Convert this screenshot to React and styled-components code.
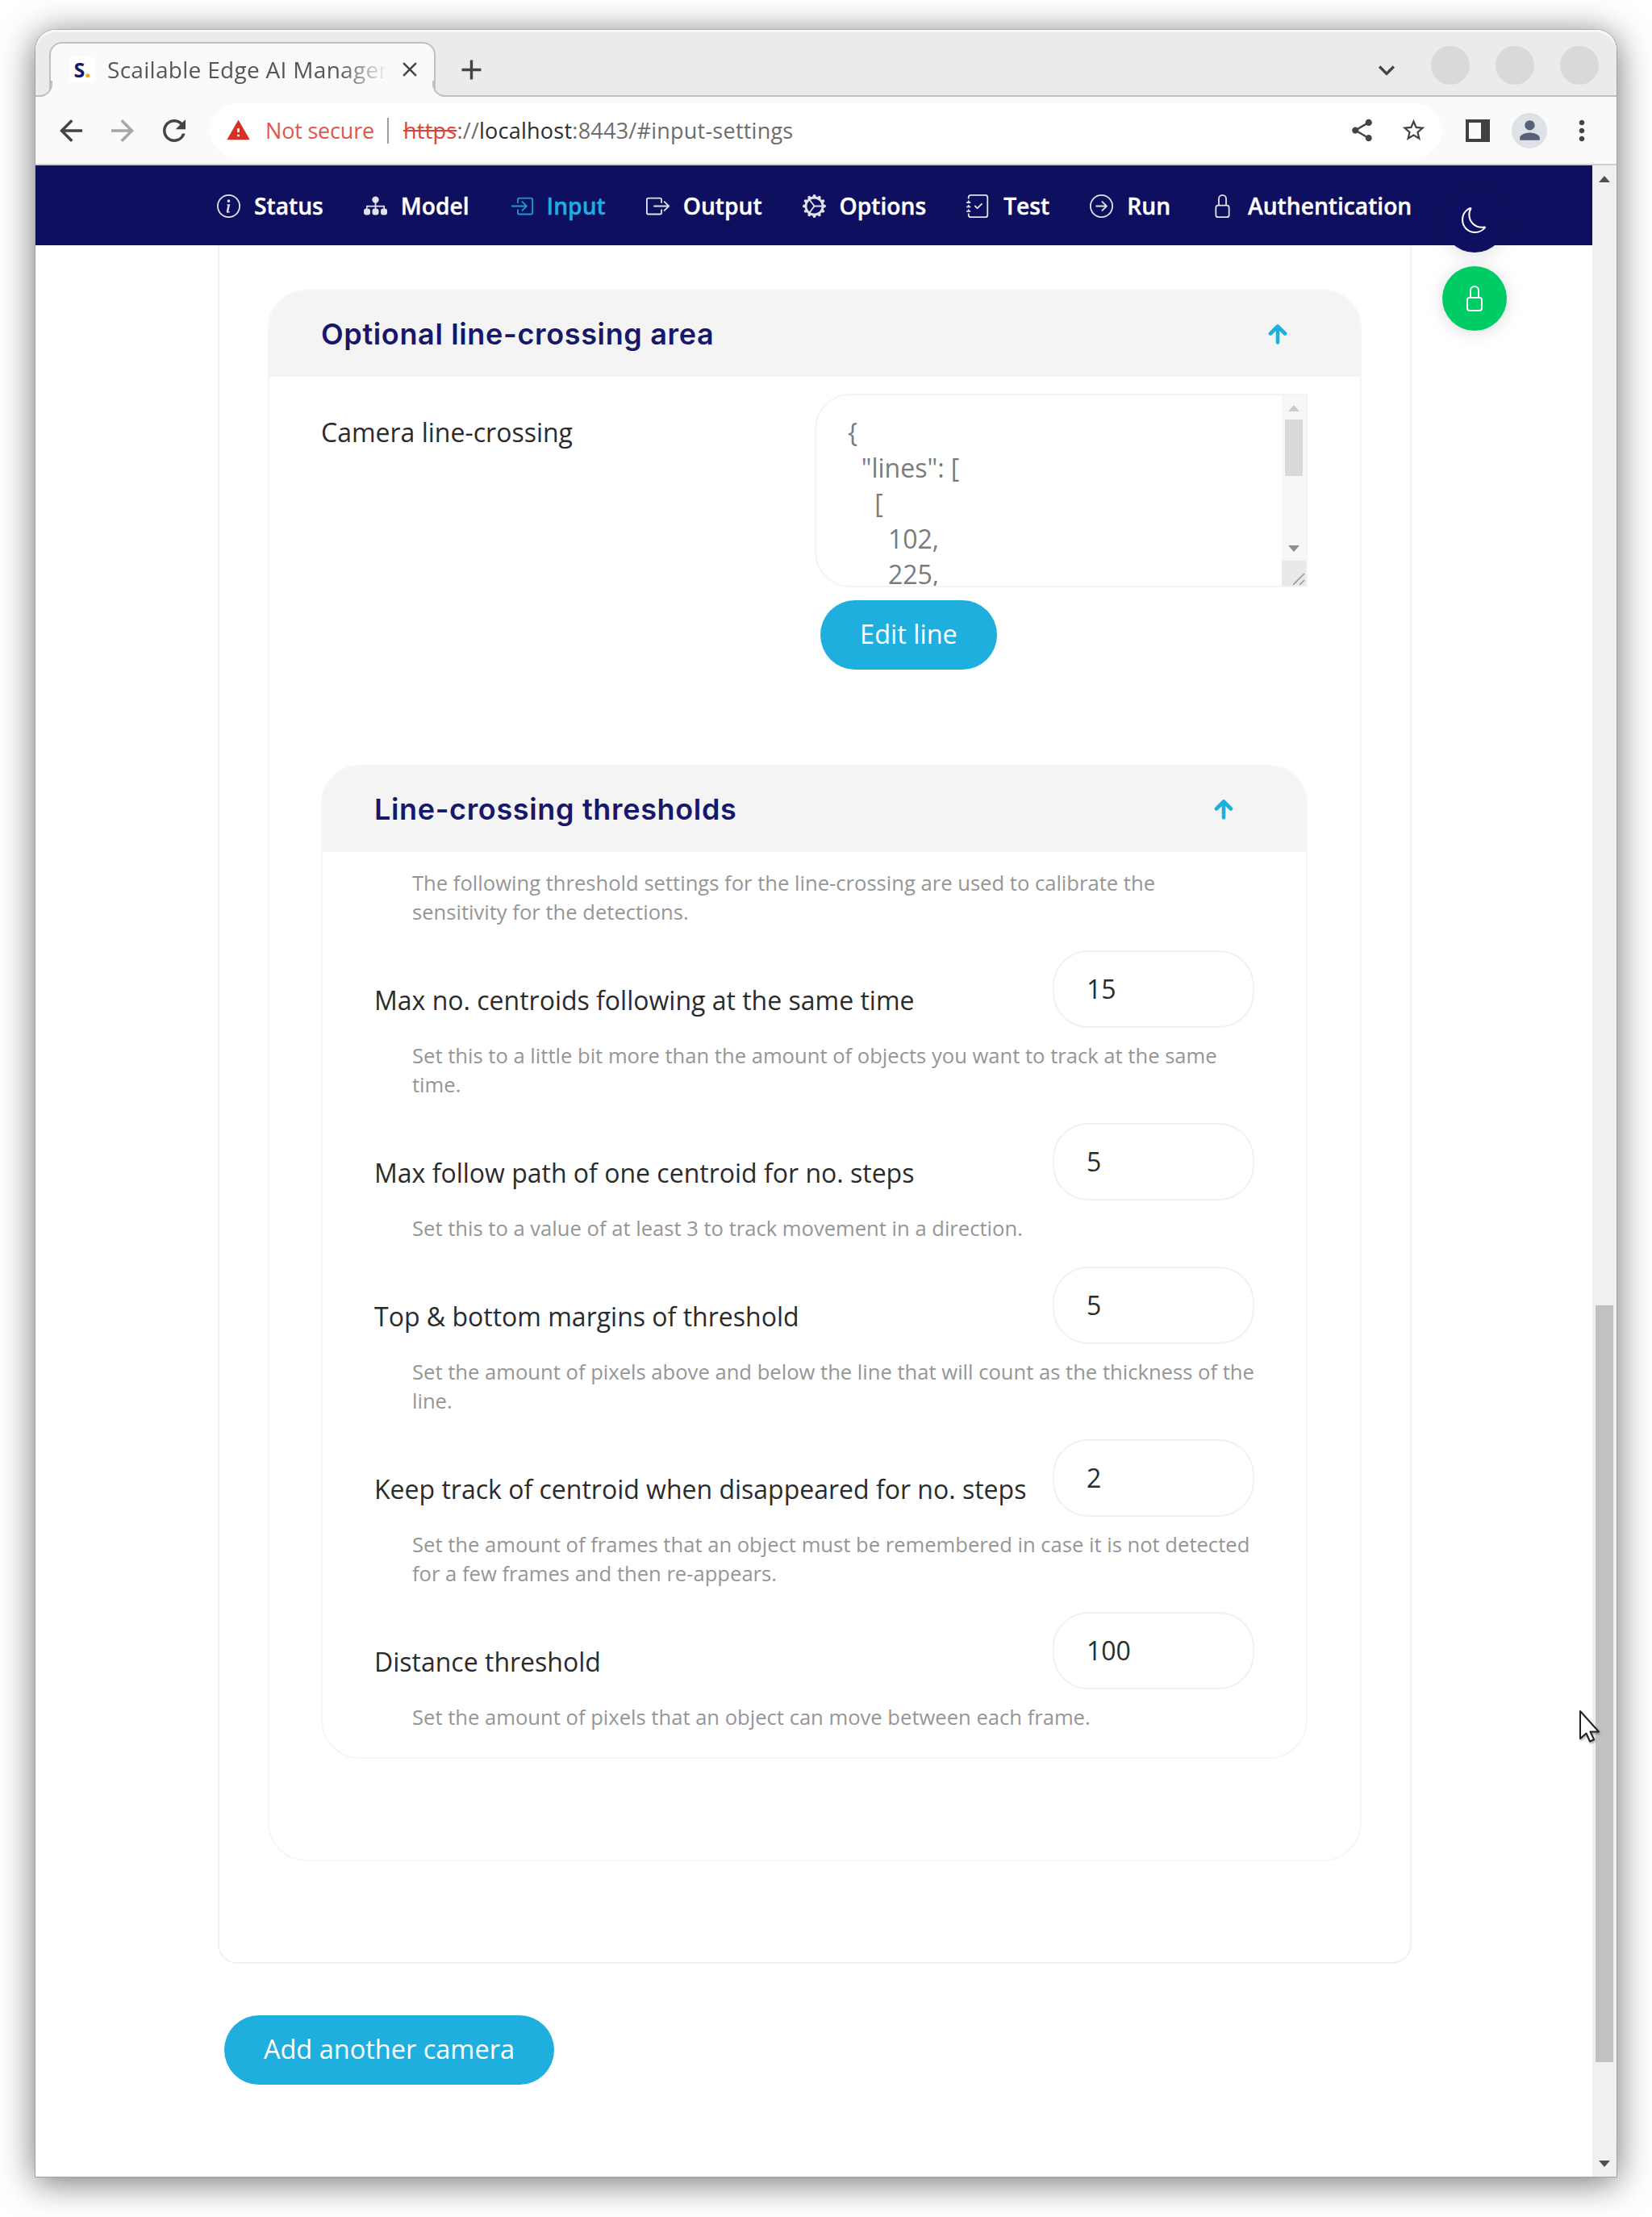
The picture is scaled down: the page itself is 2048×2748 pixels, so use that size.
import React from "react";
import styled, { createGlobalStyle } from "styled-components";
import {
  MdArrowBack,
  MdArrowForward,
  MdRefresh,
  MdWarning,
  MdShare,
  MdStarBorder,
  MdClose,
  MdAdd,
  MdKeyboardArrowDown,
  MdMoreVert,
  MdPerson,
} from "react-icons/md";
import {
  BsInfoCircle,
  BsBoxArrowInRight,
  BsBoxArrowRight,
  BsGearWideConnected,
  BsJournalCheck,
  BsArrowRightCircle,
  BsLock,
  BsMoon,
} from "react-icons/bs";

const NAVY = "#0f0f5f";
const BLUE = "#1fafde";
const HEADER_GREY = "#f4f4f4";

const GlobalStyle = createGlobalStyle`
  * { box-sizing: border-box; }
  body {
    margin: 0;
    background: #fff;
    font-family: "Open Sans", "Noto Sans", sans-serif;
    color: #2b2b2b;
  }
  button, input, textarea { font: inherit; color: inherit; }
`;

const Desktop = styled.div`
  width: 2048px;
  height: 2748px;
  padding: 36px 43px 49px 43px;
  overflow: hidden;
`;

const Window = styled.div`
  position: relative;
  display: flex;
  flex-direction: column;
  height: 100%;
  border: 1px solid #a2a2a2;
  border-top-color: #b4b4b4;
  border-radius: 26px 26px 0 0;
  background: #fff;
  box-shadow: 0 6px 44px rgba(0, 0, 0, 0.56);
`;

/* ---------- browser chrome ---------- */

const TabStrip = styled.div`
  display: flex;
  align-items: flex-end;
  height: 83px;
  flex: none;
  padding: 0 22px 0 17px;
  border-radius: 25px 25px 0 0;
  border-bottom: 2px solid #c0c0c0;
  background: #ebebeb;
  box-shadow: inset 0 3px 0 #f7f7f7;
`;

const Tab = styled.div`
  position: relative;
  display: flex;
  align-items: center;
  width: 479px;
  height: 68px;
  margin-bottom: -2px;
  padding: 0 12px 2px 23px;
  border: 2px solid #c0c0c0;
  border-bottom: 0;
  border-radius: 16px 16px 0 0;
  background: #fafafa;

  &::before,
  &::after {
    content: "";
    position: absolute;
    bottom: 0;
    width: 18px;
    height: 18px;
    border-bottom: 2px solid #c0c0c0;
    clip-path: inset(0);
  }
  &::before {
    left: -18px;
    border-right: 2px solid #c0c0c0;
    border-bottom-right-radius: 16px;
    box-shadow: 6px 6px 0 2px #fafafa;
  }
  &::after {
    right: -18px;
    border-left: 2px solid #c0c0c0;
    border-bottom-left-radius: 16px;
    box-shadow: -6px 6px 0 2px #fafafa;
  }
`;

const Favicon = styled.span`
  display: flex;
  flex: none;
  align-items: center;
  justify-content: center;
  width: 32px;
  height: 32px;
  margin-right: 15px;
  border-radius: 5px;
  background: #fff;
  color: #17176b;
  font-size: 25px;
  font-weight: 700;

  b { color: #f6a721; }
`;

const TabTitle = styled.span`
  flex: none;
  width: 352px;
  overflow: hidden;
  white-space: nowrap;
  font-size: 28px;
  line-height: 40px;
  letter-spacing: 0.3px;
  color: #565656;
  mask-image: linear-gradient(90deg, #000 82%, transparent 99%);
`;

const ChromeIcon = styled.span`
  display: flex;
  flex: none;
  font-size: ${(p) => p.$size}px;
  color: ${(p) => p.$color || "#444"};
  margin: ${(p) => p.$margin || 0};
`;

const WindowButtons = styled.div`
  display: flex;
  gap: 32px;
  margin-left: 35px;
  align-self: center;
  padding-top: 6px;
`;

const WindowButton = styled.span`
  width: 48px;
  height: 48px;
  border-radius: 50%;
  background: #d9d9d9;
`;

const Toolbar = styled.div`
  display: flex;
  align-items: center;
  flex: none;
  height: 85px;
  padding: 0 21px 0 23px;
  border-bottom: 2px solid #cfcfcf;
  background: #fafafa;
`;

const HistoryButtons = styled.div`
  display: flex;
  gap: 22px;
  margin-right: 23px;
`;

const Omnibox = styled.div`
  display: flex;
  align-items: center;
  width: 1528px;
  height: 68px;
  padding: 0 19px 0 20px;
  border-radius: 34px;
  background: #fff;
  font-size: 27px;
  line-height: 36px;
  white-space: pre;
`;

const NotSecure = styled.span`
  margin-left: 18px;
  width: 135px;
  letter-spacing: -0.2px;
  color: #e2564c;
`;

const Divider = styled.span`
  width: 2px;
  height: 32px;
  margin: 0 18px 0 16px;
  background: #9d9d9d;
`;

const Url = styled.span`
  flex: 1;
  letter-spacing: 0.24px;
  color: #6d6d6d;

  s { color: #dc4338; }
  strong { font-weight: 400; color: #2d2d2d; }
`;

const SidePanelIcon = styled.span`
  width: 30px;
  height: 28px;
  margin: 0 27px 0 29px;
  border: 4px solid #404040;
  border-right-width: 11px;
`;

const Avatar = styled.span`
  display: flex;
  align-items: center;
  justify-content: center;
  width: 44px;
  height: 44px;
  border-radius: 50%;
  background: #dee1e6;
  color: #57607a;
  font-size: 37px;
`;

/* ---------- page ---------- */

const Viewport = styled.div`
  display: flex;
  flex: 1;
  min-height: 0;
`;

const Page = styled.main`
  flex: 1;
`;

const Nav = styled.nav`
  display: flex;
  align-items: center;
  gap: 50px;
  height: 99px;
  padding: 0 0 0 225px;
  background: ${NAVY};
`;

const NavItem = styled.a`
  display: flex;
  align-items: center;
  gap: 17px;
  font-size: 28.2px;
  line-height: 40px;
  font-weight: 600;
  white-space: nowrap;
  color: ${(p) => (p.$active ? BLUE : "#fff")};
  -webkit-text-stroke: 0.4px;

  svg {
    width: 29px;
    height: 29px;
    margin-top: 2px;
    opacity: 0.88;
  }
`;

const Camera = styled.section`
  width: 1480px;
  margin-left: 226px;
  height: 2130px;
  padding: 55px 60px 0;
  border: 2px solid #f1f1f1;
  border-top: 0;
  border-radius: 0 0 24px 24px;
`;

const Panel = styled.section`
  border: 2px solid #f6f6f6;
  border-radius: 48px;
  overflow: hidden;
  margin-top: ${(p) => p.$top || 0}px;
  height: ${(p) => p.$height}px;
`;

const PanelHeader = styled.header`
  display: flex;
  align-items: center;
  justify-content: space-between;
  height: 107px;
  margin-top: -1px;
  padding: 0 90px 0 64px;
  background: ${HEADER_GREY};
`;

const PanelTitle = styled.h2`
  margin: 0;
  font-family: Inter, "Open Sans", sans-serif;
  font-size: 36px;
  line-height: 48px;
  font-weight: 600;
  letter-spacing: 0.65px;
  color: #17176b;
`;

const PanelBody = styled.div`
  padding: ${(p) => p.$padding};
`;

const LineRow = styled.div`
  display: flex;
  justify-content: space-between;
`;

const Label = styled.label`
  font-size: 32px;
  line-height: 44px;
  white-space: nowrap;
`;

const LineLabel = styled(Label)`
  padding-top: 26px;
`;

const LineControls = styled.div`
  width: 611px;
`;

const JsonBox = styled.div`
  display: flex;
  height: 240px;
  border: 2px solid #f4f4f4;
  border-radius: 44px 0 0 44px;
  overflow: hidden;
`;

const JsonText = styled.pre`
  flex: 1;
  margin: 0;
  padding: 24px 0 0 39px;
  font-family: inherit;
  font-size: 32px;
  line-height: 43.9px;
  color: #7b7b7b;
`;

const JsonScroll = styled.div`
  display: flex;
  flex-direction: column;
  align-items: center;
  width: 30px;
  background: #f7f7f7;
`;

const JsonThumb = styled.div`
  width: 22px;
  height: 70px;
  margin: 10px 0 auto;
  background: #d9d9d9;
`;

const Resizer = styled.div`
  display: flex;
  align-items: flex-end;
  justify-content: flex-end;
  width: 30px;
  height: 31px;
  margin-top: 11px;
  background: #e8e8e8;
`;

const Triangle = styled.span`
  width: 0;
  height: 0;
  border: 7px solid transparent;
  border-${(p) => (p.$down ? "top" : "bottom")}: 8px solid ${(p) => p.$color};
  border-${(p) => (p.$down ? "bottom" : "top")}: 0;
  margin: ${(p) => p.$margin || 0};
`;

const Button = styled.button`
  display: block;
  height: 86px;
  padding: 0 0 3px;
  border: 0;
  border-radius: 43px;
  background: ${BLUE};
  color: #fff;
  font-size: 32.5px;
  width: ${(p) => p.$width}px;
  margin: ${(p) => p.$margin};
`;

const Hint = styled.p`
  margin: 0;
  padding-left: 47px;
  font-size: 25.6px;
  line-height: 36px;
  white-space: pre;
  color: #969696;
`;

const Setting = styled.div`
  margin-top: 29px;
`;

const SettingRow = styled.div`
  display: flex;
  justify-content: space-between;
  height: 96px;
  margin-bottom: 17px;

  label { padding-top: 40px; }
`;

const NumberInput = styled.input`
  width: 250px;
  height: 96px;
  padding: 0 0 1px 40px;
  border: 2px solid #f1f1f1;
  border-radius: 44px;
  outline: 0;
  background: #fff;
  font-size: 32px;
`;

const PageScroll = styled.div`
  display: flex;
  flex-direction: column;
  align-items: center;
  width: 30px;
  background: #f0f0f0;
`;

const PageThumb = styled.div`
  width: 22px;
  height: 938px;
  margin: 1392px 0 auto;
  background: #c1c1c1;
`;

const FloatingButtons = styled.div`
  position: absolute;
  top: 196px;
  right: 136px;
  display: flex;
  flex-direction: column;
  gap: 17px;
`;

const FloatingButton = styled.button`
  display: flex;
  align-items: center;
  justify-content: center;
  width: 80px;
  height: 80px;
  padding: 0;
  border: 0;
  border-radius: 50%;
  background: ${(p) => p.$color};
  color: #fff;
  font-size: 32px;
  box-shadow: 0 2px 22px rgba(0, 0, 0, 0.14);
`;

const Cursor = styled.svg`
  position: absolute;
  left: 1913px;
  top: 2082px;
  filter: drop-shadow(1px 2px 1px rgba(0, 0, 0, 0.3));
`;

const ModelIcon = () => (
  <svg viewBox="0 0 29 29" fill="currentColor">
    <circle cx="14.5" cy="6.6" r="4.2" />
    <rect x="13.6" y="9" width="1.8" height="11" />
    <path d="M3 19v-5.2h23V19h-1.6v-3.6H4.6V19z" />
    <rect x="0" y="17.6" width="8" height="7.8" rx="3" />
    <rect x="10.5" y="17.6" width="8" height="7.8" rx="3" />
    <rect x="21" y="17.6" width="8" height="7.8" rx="3" />
  </svg>
);

const UpArrow = () => (
  <svg width="24" height="26" viewBox="0 0 24 26" fill="none" stroke={BLUE} strokeWidth="4.6" strokeLinecap="round" strokeLinejoin="round">
    <path d="M12 23.5V3.5M3 12.5l9-9 9 9" />
  </svg>
);

const NAV_ITEMS = [
  { label: "Status", Icon: BsInfoCircle },
  { label: "Model", Icon: ModelIcon },
  { label: "Input", Icon: BsBoxArrowInRight, active: true },
  { label: "Output", Icon: BsBoxArrowRight },
  { label: "Options", Icon: BsGearWideConnected },
  { label: "Test", Icon: BsJournalCheck },
  { label: "Run", Icon: BsArrowRightCircle },
  { label: "Authentication", Icon: BsLock },
];

const SETTINGS = [
  {
    label: "Max no. centroids following at the same time",
    value: "15",
    hint: "Set this to a little bit more than the amount of objects you want to track at the same\ntime.",
  },
  {
    label: "Max follow path of one centroid for no. steps",
    value: "5",
    hint: "Set this to a value of at least 3 to track movement in a direction.",
  },
  {
    label: "Top & bottom margins of threshold",
    value: "5",
    hint: "Set the amount of pixels above and below the line that will count as the thickness of the\nline.",
  },
  {
    label: "Keep track of centroid when disappeared for no. steps",
    value: "2",
    hint: "Set the amount of frames that an object must be remembered in case it is not detected\nfor a few frames and then re-appears.",
  },
  {
    label: "Distance threshold",
    value: "100",
    hint: "Set the amount of pixels that an object can move between each frame.",
  },
];

const LINES_JSON = `{
  "lines": [
    [
      102,
      225,`;

function BrowserChrome() {
  return (
    <>
      <TabStrip>
        <Tab>
          <Favicon>S<b>.</b></Favicon>
          <TabTitle>Scailable Edge AI Manager</TabTitle>
          <ChromeIcon $size={30} $margin="0 0 0 8px"><MdClose /></ChromeIcon>
        </Tab>
        <ChromeIcon $size={41} $margin="0 auto 11px 24px"><MdAdd /></ChromeIcon>
        <ChromeIcon $size={40} $margin="0 0 11px"><MdKeyboardArrowDown /></ChromeIcon>
        <WindowButtons>
          <WindowButton />
          <WindowButton />
          <WindowButton />
        </WindowButtons>
      </TabStrip>
      <Toolbar>
        <HistoryButtons>
          <ChromeIcon $size={42}><MdArrowBack /></ChromeIcon>
          <ChromeIcon $size={42} $color="#a6a6a6"><MdArrowForward /></ChromeIcon>
          <ChromeIcon $size={42}><MdRefresh /></ChromeIcon>
        </HistoryButtons>
        <Omnibox>
          <ChromeIcon $size={31} $color="#d93025"><MdWarning /></ChromeIcon>
          <NotSecure>Not secure</NotSecure>
          <Divider />
          <Url><s>https</s>://<strong>localhost</strong>:8443/#input-settings</Url>
          <ChromeIcon $size={33} $margin="0 31px 0 0"><MdShare /></ChromeIcon>
          <ChromeIcon $size={33}><MdStarBorder /></ChromeIcon>
        </Omnibox>
        <SidePanelIcon />
        <Avatar><MdPerson /></Avatar>
        <ChromeIcon $size={40} $margin="0 0 0 23px"><MdMoreVert /></ChromeIcon>
      </Toolbar>
    </>
  );
}

export default function App() {
  return (
    <Desktop>
      <GlobalStyle />
      <Window>
        <BrowserChrome />
        <Viewport>
          <Page>
            <Nav>
              {NAV_ITEMS.map(({ label, Icon, active }) => (
                <NavItem key={label} $active={active}>
                  <Icon />
                  {label}
                </NavItem>
              ))}
            </Nav>
            <Camera>
              <Panel $height={1948}>
                <PanelHeader>
                  <PanelTitle>Optional line-crossing area</PanelTitle>
                  <UpArrow />
                </PanelHeader>
                <PanelBody $padding="21px 65px 0 64px">
                  <LineRow>
                    <LineLabel>Camera line-crossing</LineLabel>
                    <LineControls>
                      <JsonBox>
                        <JsonText>{LINES_JSON}</JsonText>
                        <JsonScroll>
                          <Triangle $color="#cbcbcb" $margin="12px 0 0" />
                          <JsonThumb />
                          <Triangle $down $color="#8f8f8f" />
                          <Resizer>
                            <svg width="16" height="16" viewBox="0 0 16 16" stroke="#9a9a9a" strokeWidth="1.6">
                              <path d="M0 15L14 1M8 15l6-6" />
                            </svg>
                          </Resizer>
                        </JsonScroll>
                      </JsonBox>
                      <Button $width={219} $margin="16px 0 0 7px">Edit line</Button>
                    </LineControls>
                  </LineRow>
                  <Panel $top={118} $height={1232}>
                    <PanelHeader>
                      <PanelTitle>Line-crossing thresholds</PanelTitle>
                      <UpArrow />
                    </PanelHeader>
                    <PanelBody $padding="21px 64px 0">
                      <Hint>{"The following threshold settings for the line-crossing are used to calibrate the\nsensitivity for the detections."}</Hint>
                      {SETTINGS.map((s) => (
                        <Setting key={s.label}>
                          <SettingRow>
                            <Label>{s.label}</Label>
                            <NumberInput defaultValue={s.value} />
                          </SettingRow>
                          <Hint>{s.hint}</Hint>
                        </Setting>
                      ))}
                    </PanelBody>
                  </Panel>
                </PanelBody>
              </Panel>
            </Camera>
            <Button $width={409} $margin="64px 0 0 234px">Add another camera</Button>
          </Page>
          <PageScroll>
            <Triangle $color="#505050" $margin="13px 0 0" />
            <PageThumb />
            <Triangle $down $color="#505050" $margin="0 0 12px" />
          </PageScroll>
        </Viewport>
        <FloatingButtons>
          <FloatingButton $color={NAVY}><BsMoon /></FloatingButton>
          <FloatingButton $color="#00cc66"><BsLock /></FloatingButton>
        </FloatingButtons>
        <Cursor width="28" height="42" viewBox="0 0 28 42">
          <path d="M2 2v34l7.5-6.5 4.6 10 5-2.4-4.6-9.6H25z" fill="#fff" stroke="#222" strokeWidth="2" strokeLinejoin="round" />
        </Cursor>
      </Window>
    </Desktop>
  );
}
